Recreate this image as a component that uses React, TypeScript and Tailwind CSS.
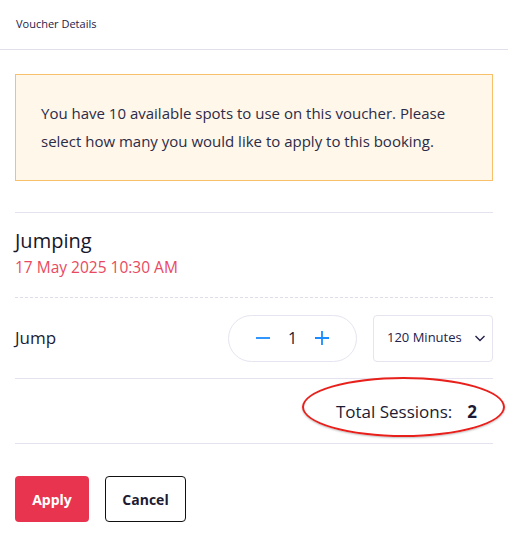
import React from "react";

const font = { fontFamily: "'Open Sans', 'Noto Sans', sans-serif" };

export default function App() {
  return (
    <div className="relative w-[508px] h-[543px] bg-white text-[#1c1b33]" style={font}>
      {/* Header */}
      <div className="h-[50px] flex items-center px-4 border-b border-[#e0dfea]">
        <span className="text-[11px] text-[#23224a]">Voucher Details</span>
      </div>

      <div className="px-[15px] pt-[24px]">
        {/* Notice */}
        <div className="border border-[#f8c06a] bg-[#fff7ea] pl-[25px] pr-4 pt-[24px] pb-[25px] text-[15px] leading-[28px] text-[#2c2b47]">
          You have 10 available spots to use on this voucher. Please select how many you would like to apply to this booking.
        </div>

        <div className="mt-[31px] border-t border-[#e3e2ee]" />

        {/* Event */}
        <div className="pt-[14px] pb-[18px]">
          <div className="text-[20px] leading-[28px] text-[#16162a]">Jumping</div>
          <div className="text-[15.5px] leading-[24px] text-[#e9495f]">17 May 2025 10:30 AM</div>
        </div>

        <div className="border-t border-dashed border-[#dedde8]" />

        {/* Item row */}
        <div className="flex items-center h-[80px]">
          <span className="text-[17px] text-[#1c1b33]">Jump</span>
          <div className="ml-auto flex items-center gap-4">
            <div className="flex items-center justify-between w-[129px] h-[47px] rounded-full border border-[#e5e4f0] px-[26px]">
              <svg width="16" height="16" viewBox="0 0 16 16" fill="none" stroke="#1a8cff" strokeWidth="1.8">
                <path d="M1 8h14" />
              </svg>
              <span className="text-[16px] text-[#1c1b33]">1</span>
              <svg width="16" height="16" viewBox="0 0 16 16" fill="none" stroke="#1a8cff" strokeWidth="1.8">
                <path d="M1 8h14M8 1v14" />
              </svg>
            </div>
            <div className="flex items-center gap-3 w-[120px] h-[47px] rounded border border-[#e5e4f0] pl-[13px]">
              <span className="text-[13px] text-[#23224a]">120 Minutes</span>
              <svg width="12" height="12" viewBox="0 0 12 12" fill="none" stroke="#23224a" strokeWidth="1.4">
                <path d="M1.5 4l4.5 4.5 4.5-4.5" />
              </svg>
            </div>
          </div>
        </div>

        <div className="border-t border-[#e3e2ee]" />

        {/* Total */}
        <div className="flex items-center justify-end h-[64px] pr-[16px] pt-[1px] text-[17px]">
          <span className="text-[#1c1b33]">Total Sessions:</span>
          <span className="ml-[15px] font-bold text-[#1c1b33]">2</span>
        </div>

        <div className="border-t border-[#e3e2ee]" />

        {/* Actions */}
        <div className="flex gap-4 mt-[32px]">
          <button className="w-[74px] h-[46px] rounded bg-[#e8344e] text-white text-[14px] font-bold">Apply</button>
          <button className="w-[81px] h-[46px] rounded border border-[#111] text-[#1c1b33] text-[14px] font-bold">Cancel</button>
        </div>
      </div>

      {/* annotation ellipse */}
      <div className="absolute left-[302px] top-[377px] w-[203px] h-[60px] rounded-[50%] border-2 border-[#e8201c] shadow-[0_1px_2px_rgba(0,0,0,0.25)]" />
    </div>
  );
}
